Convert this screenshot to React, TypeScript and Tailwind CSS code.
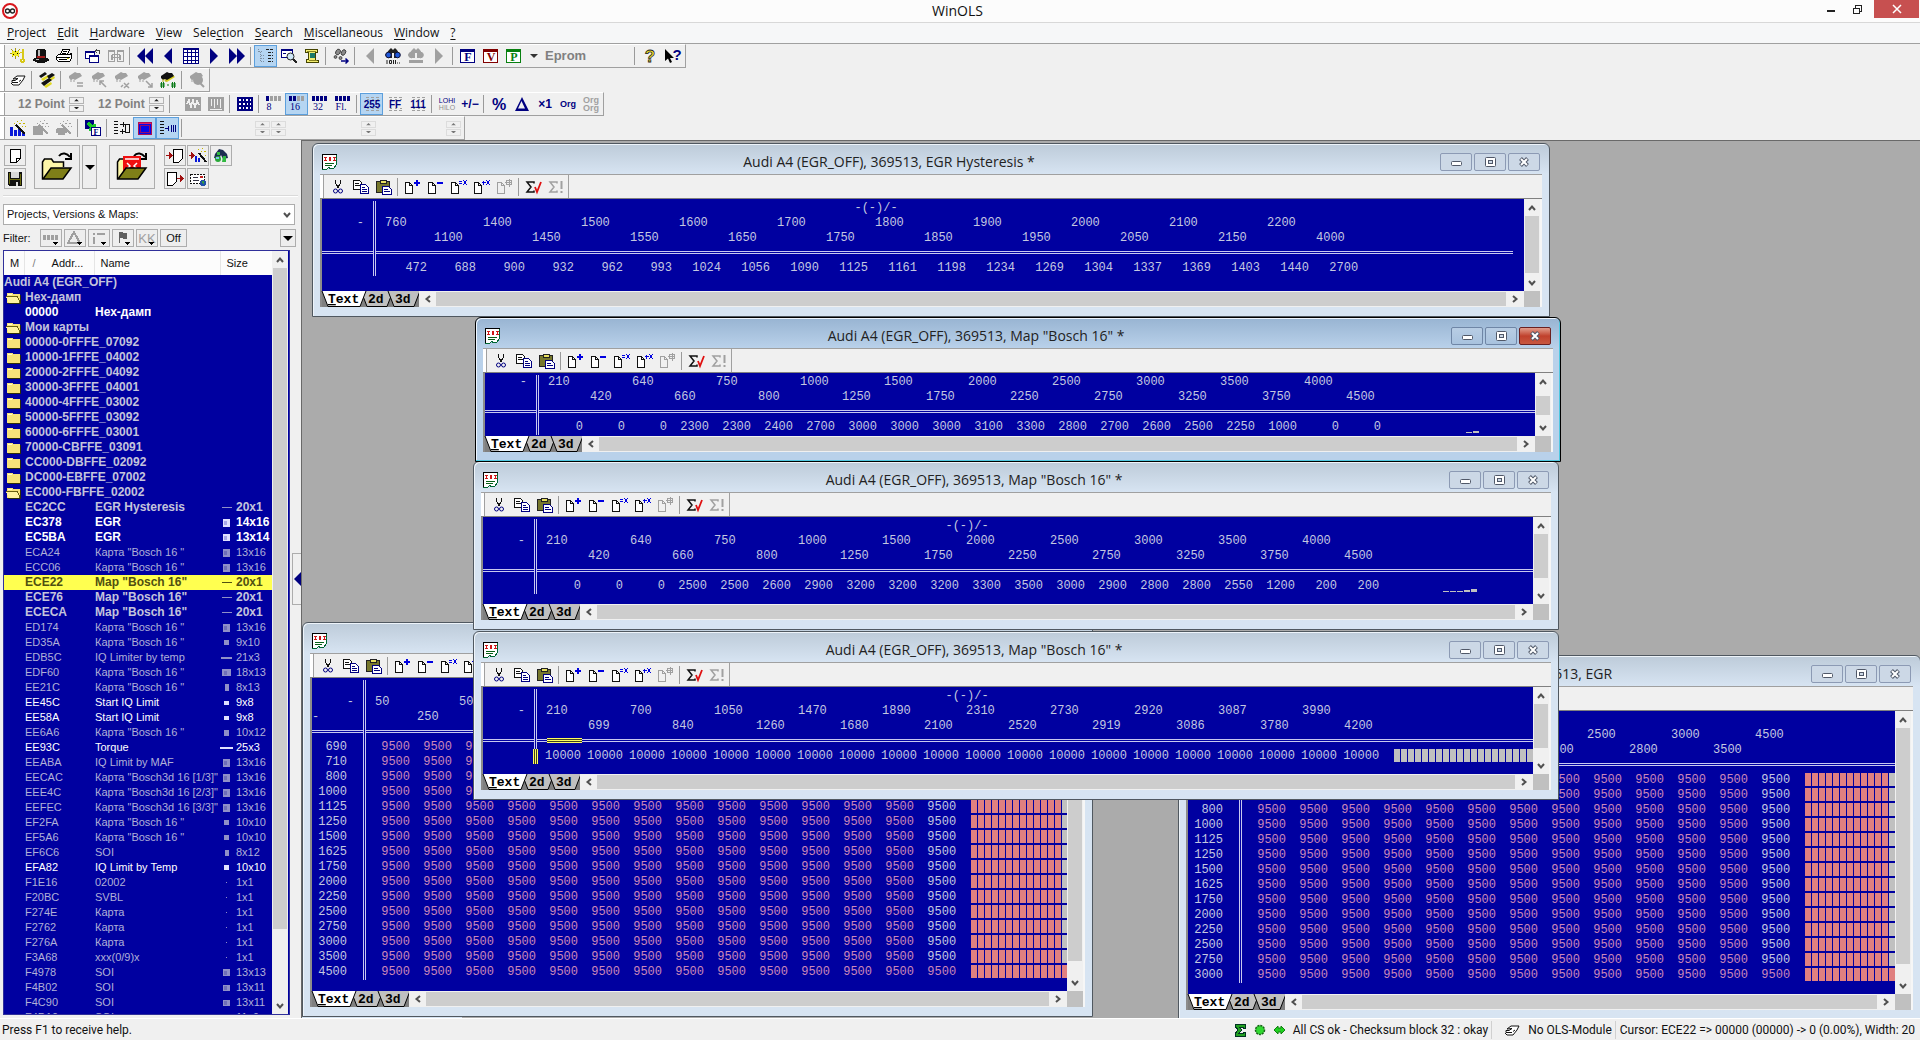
import type { ReactNode } from "react";
import clsx from "clsx";

/* ---------- icons ---------- */

type SvgProps = { w?: number; h?: number; smooth?: boolean; children: ReactNode };

const Svg: React.FC<SvgProps> = ({ w = 16, h = 16, smooth, children }) => (
  <svg
    width={w}
    height={h}
    viewBox={`0 0 ${w} ${h}`}
    fill="none"
    className="block shrink-0 overflow-visible"
    shapeRendering={smooth ? "auto" : "crispEdges"}
    aria-hidden="true"
  >
    {children}
  </svg>
);

const NAVY = "#000080";
const GRAY = "#a0a0a0";

type LabelProps = {
  x?: number;
  y: number;
  size?: number;
  fill?: string;
  serif?: boolean;
  light?: boolean;
  children: ReactNode;
};

const Label: React.FC<LabelProps> = ({ x = 8, y, size = 9, fill = NAVY, serif, light, children }) => (
  <text
    x={x}
    y={y}
    fontSize={size}
    fill={fill}
    textAnchor="middle"
    fontWeight={light ? 400 : 700}
    fontFamily={serif ? "Liberation Serif, serif" : "Liberation Sans, sans-serif"}
  >
    {children}
  </text>
);

const LogoIcon = () => (
  <Svg w={18} h={18} smooth>
    <circle cx="9" cy="9" r="7" fill="#fff" stroke="#d8161c" strokeWidth="2" />
    <circle cx="6.5" cy="9" r="2" stroke="#222" strokeWidth="1.3" />
    <circle cx="11.5" cy="9" r="2" stroke="#222" strokeWidth="1.3" />
  </Svg>
);

const KeyIcon = () => (
  <Svg>
    <path d="M0 5.5h10M5.5 0v11M1.5 1.5l8 8M9.5 1.5l-8 8" stroke="#a89c10" />
    <path d="M2 3h7v5H2z" fill="#f0e820" />
    <path d="M5 3h1v1H5zM3 6h1v1H3zM7 5h1v1H7z" fill="#000" />
    <path d="M12 1h2v10h-2zM10 4h2v1h-2zM10 11h5v3h-1v1h-3v-1h-1z" fill="#d8c818" />
    <path d="M12 12h1v1h-1z" fill="#fff" />
  </Svg>
);

const HatIcon = () => (
  <Svg>
    <path d="M4 1h8v1h1v8h2v1h1v2h-2v1h-2v1H4v-1H2v-1H0v-2h1v-1h2V2h1z" fill="#111" />
    <path d="M5 2h2v6H5zM3 11h3v1H3z" fill="#bbb" />
    <path d="M4 8h8v2H4z" fill="#a01818" />
  </Svg>
);

const PrinterIcon = () => (
  <Svg>
    <path d="M4.5 6.5l2-5h7l-2 5M2.5 6.5h11l2-1v5l-2 3h-11l-2-2v-3z" fill="#fff" stroke="#000" />
    <path d="M7 3.5h4M6 5.5h4M1 9.5h13M3 11.5h8" stroke="#000" />
    <path d="M11 10h2v1h-2z" fill="#d0d000" />
  </Svg>
);

const WindowsIcon = () => (
  <Svg>
    <path d="M.5 3.5h9v7h-9z" stroke={NAVY} fill="#fff" />
    <path d="M0 3h10v2H0z" fill={NAVY} />
    <path d="M4.5 7.5h9v7h-9z" stroke={NAVY} fill="#fff" />
    <path d="M4 7h10v2H4z" fill={NAVY} />
    <path d="M11 2.5h3v3M12 1l-2 2 2 2" stroke="#444" />
  </Svg>
);

const CompareIcon = () => (
  <Svg>
    <path d="M.5 2.5h6v11h-6zM9.5 2.5h6v11h-6z" stroke={GRAY} />
    <path d="M0 2h7v2H0zM9 2h7v2H9zM4 6h8v1H4zM4 9h8v1H4zM3 7h2v5H3zM11 7h2v5h-2z" fill={GRAY} />
  </Svg>
);

const Arrow: React.FC<{ left?: boolean; double?: boolean; gray?: boolean }> = ({ left, double, gray }) => (
  <Svg smooth>
    <g fill={gray ? GRAY : NAVY} transform={left ? "translate(16 0) scale(-1 1)" : undefined}>
      {double ? <path d="M0 0l8 8-8 8zM8 0l8 8-8 8z" /> : <path d="M4 0l8 8-8 8z" />}
    </g>
  </Svg>
);

const GridIcon = () => (
  <Svg>
    <path d="M.5.5h15v15H.5zM.5 4.5h15M.5 8.5h15M.5 12.5h15M4.5.5v15M8.5.5v15M12.5.5v15" stroke={NAVY} fill="#fff" />
    <path d="M0 0h16v2H0z" fill={NAVY} />
  </Svg>
);

const TreeIcon = () => (
  <Svg>
    <path d="M.5 1v3M1 3.5h4M2.5 4v10M3 7.5h3M3 10.5h3M3 13.5h3" stroke="#7d8ea0" strokeDasharray="1 1" />
    <path d="M8 1.5h7M10 4.5h5M10 7.5h5M10 10.5h5M10 13.5h5" stroke="#222" strokeDasharray="3 1" />
  </Svg>
);

const WindowZoomIcon = () => (
  <Svg>
    <path d="M.5 1.5h11v8H.5z" stroke={NAVY} fill="#fff" />
    <path d="M0 1h12v2H0zM2 5h3v1H2z" fill={NAVY} />
    <circle cx="9.5" cy="8.5" r="3.5" stroke="#222" fill="#cfe8f8" shapeRendering="auto" />
    <path d="M12 11l3.5 4" stroke="#222" strokeWidth="2" />
  </Svg>
);

const ScrollIcon = () => (
  <Svg>
    <path d="M1.5 1.5h12v3h-2v8h3v2h-12v-3h2v-7h-3z" stroke="#444400" fill="#f4ee70" />
    <path d="M6 5h5v5H6z" fill="#1a7a6a" />
    <path d="M3 3h9M5 12h8" stroke="#8a8420" />
  </Svg>
);

const StepsIcon = () => (
  <Svg smooth>
    <g fill="#8a8a8a" stroke="#333" strokeWidth=".8">
      <ellipse cx="5" cy="4" rx="2.2" ry="3" transform="rotate(30 5 4)" />
      <ellipse cx="10.5" cy="4.5" rx="2" ry="3" transform="rotate(30 10.5 4.5)" />
      <circle cx="2.5" cy="9" r="1.4" />
      <circle cx="7.5" cy="10" r="1.5" />
    </g>
    <path d="M8 13h7M12.5 10.5L15 13l-2.5 2.5" stroke={NAVY} strokeWidth="1.5" />
  </Svg>
);

const BinocularsIcon = ({ gray = false }) => (
  <Svg smooth>
    <path d="M4 2l2-2 2 2 2-2 2 2 3 5-3 3H9V5H7v5H3L0 7z" fill={gray ? GRAY : "#222"} />
    <circle cx="3.5" cy="7" r="2.8" fill={gray ? GRAY : "#2058d8"} stroke={gray ? GRAY : "#113"} />
    <circle cx="12.5" cy="7" r="2.8" fill={gray ? GRAY : "#2058d8"} stroke={gray ? GRAY : "#113"} />
    {gray ? <path d="M1 12h14v3H1z" fill={GRAY} /> : <path d="M2 12v4M4.5 12.5h2v3h-2zM8.5 12v4M10.5 12v4M12 15h1M14 15h1" stroke="#222" />}
  </Svg>
);

const LetterBox: React.FC<{ letter: string; color: string }> = ({ letter, color }) => (
  <Svg>
    <path d="M.5 1.5h14v13H.5z" stroke={color} fill="#fff" />
    <path d="M0 1h15v3H0z" fill={color} />
    <Label x={8} y={13} size={12} fill={color} serif>
      {letter}
    </Label>
  </Svg>
);

const HelpIcon = () => (
  <Svg>
    <text x="8" y="14" textAnchor="middle" fontSize="17" fontWeight="700" fill="#f4e428" stroke="#222" strokeWidth=".8" fontFamily="Liberation Sans, sans-serif">
      ?
    </text>
  </Svg>
);

const PointerHelpIcon = () => (
  <Svg smooth>
    <path d="M0 1v12l3-2.5L5 15l2-1-2-4h4z" fill="#000" />
    <Label x={12} y={12} size={15}>
      ?
    </Label>
  </Svg>
);

const HandIcon = () => (
  <Svg smooth>
    <path d="M1 11l2 2h6l4-5 2-4H7L3 7l5-.5-3 2H2v2h6" stroke="#111" fill="#fff" />
    <path d="M9 9.5l2-1.5" stroke="#111" />
  </Svg>
);

const ChipIcon: React.FC<{ gray?: boolean; mark?: string; diff?: boolean }> = ({ gray, mark, diff }) => {
  const c = gray ? GRAY : "#111";
  return (
    <Svg smooth>
      {!gray && <path d="M4 8l9-5 2 2-8 5z" fill="#d8d020" />}
      <path d="M1 4l6-4 2 1h3l2 3-7 4-2-1-2 1-2-2z" fill={c} />
      <path d="M3 7v3M6 8v2" stroke={gray ? GRAY : "#b0a818"} />
      {mark === "=" && <path d="M9 11h6M9 14h6" stroke={c} strokeWidth="1.5" />}
      {mark === "nw" && <path d="M15 15L9 9M9 13V9h4" stroke={c} strokeWidth="1.5" />}
      {mark === "x" && <path d="M7 15l2-2M10 11l5 5M15 11l-5 5" stroke={c} strokeWidth="1.5" />}
      {mark === "se" && <path d="M9 9l6 6M15 11v4h-4" stroke={c} strokeWidth="1.5" />}
      {mark === "o" && <circle cx="9" cy="8" r="5" fill={c} />}
      {mark === "o" && <path d="M11 11l4 4" stroke={c} strokeWidth="2" />}
      {diff && <path d="M0 12h5M0 14h5M1.5 10v6M3.5 10v6M7 13h2M11 12h5M11 14h5M12.5 10v6M14.5 10v6" stroke="#0a7a18" />}
    </Svg>
  );
};

const ChipsIcon = () => (
  <Svg smooth>
    <path d="M2 7l7-4 1 2-6 4zM9 8l6-4 1 2-6 4zM5 14l7-4 1 2-6 4z" fill="#e0d820" />
    <path d="M0 4l6-4 2 2-6 4zM8 4l5-3 3 2-6 4zM2 11l8-5 3 2-8 6z" fill="#111" />
  </Svg>
);

const WaveIcon = ({ bars = false }) => (
  <Svg>
    <path d="M0 1h16v14H0z" fill={GRAY} />
    {bars ? (
      <path d="M3.5 3v7M6.5 3v9M9.5 3v6M12.5 3v9M2 13.5h12" stroke="#f0f0f0" />
    ) : (
      <path d="M2 8l2-4 2 7 2-7 2 7 2-6 2 4" stroke="#f0f0f0" strokeWidth="1.5" />
    )}
  </Svg>
);

const DotGridIcon = () => (
  <Svg>
    <path d="M0 1h16v14H0z" fill={NAVY} />
    <path d="M2 3h2v2H2zM6 3h1v2H6zM9 3h2v2H9zM13 3h1v2h-1zM2 7h2v2H2zM6 7h2v2H6zM10 7h1v2h-1zM13 7h1v2h-1zM2 11h2v2H2zM6 11h1v2H6zM9 11h2v2H9zM13 11h1v2h-1z" fill="#fff" />
  </Svg>
);

const BitsIcon: React.FC<{ text: string; on: number }> = ({ text, on }) => (
  <Svg>
    {[0, 1, 2, 3].map((i) => (
      <rect key={i} x={i * 4} y="0" width="3" height="5" fill={i < on ? NAVY : GRAY} />
    ))}
    <Label x={text.length > 1 ? 6 : 3} y={14} size={10} serif light>
      {text}
    </Label>
  </Svg>
);

const StackIcon: React.FC<{ text: string }> = ({ text }) => (
  <Svg>
    <path d="M2 1.5h3M7 1.5h3M12 1.5h3M2 14.5h3M7 14.5h3M12 14.5h3M3 3.5h2M8 3.5h2M13 3.5h2M3 12.5h2M8 12.5h2M13 12.5h2" stroke={GRAY} />
    <Label y={12} size={10}>
      {text}
    </Label>
  </Svg>
);

const WandIcon = ({ gray = false, oval = false }) => (
  <Svg>
    {gray ? (
      <path d={oval ? "M1 8h8v1h2v4H9v2H2v-2H0V9h1z" : "M0 6h10v9H0z"} fill={GRAY} />
    ) : (
      <path d="M0 7h3v9H0zM4 10h3v6H4zM8 8h3v8H8zM12 12h3v4h-3z" fill="#0818d8" />
    )}
    <path d="M6 5l9 9" stroke={gray ? GRAY : "#111"} strokeWidth="2" />
    <path d="M7 1h1v1H7zM11 0h1v1h-1zM13 3h2v1h-2zM9 3h2v1H9zM12 6h1v1h-1zM15 6h1v1h-1zM4 3h1v1H4z" fill={gray ? GRAY : "#c8b800"} />
  </Svg>
);

const FToolIcon = () => (
  <Svg>
    <path d="M0 0h9v9H0z" fill={NAVY} />
    <path d="M3 3l6 6M9 4v5H4" stroke="#18c828" strokeWidth="3" />
    <path d="M6.5 7.5h9v8h-9z" fill="#fff" stroke={NAVY} />
    <Label x={11} y={15} size={8} serif>
      F
    </Label>
  </Svg>
);

const LinesIcon = ({ arrows = false }) => (
  <Svg>
    <path d="M0 1.5h5M0 4.5h5M0 7.5h5M0 10.5h5M0 13.5h5" stroke="#111" strokeDasharray="4 1" />
    {arrows ? (
      <path d="M6 4.5h5M9 2v5M6 11.5h5M8 9v5M11.5 4.5h4v8h-4z" stroke="#111" />
    ) : (
      <path d="M5 8.5h4M8 6v5M11.5 5v7M13.5 5v7M15.5 5v7" stroke={NAVY} />
    )}
  </Svg>
);

const RedScreenIcon = () => (
  <Svg>
    <path d="M1.5 2.5h13v12h-13z" fill="#0808e8" stroke="#b01050" />
    <path d="M2 3h12v1H2zM4 5h8v1H4z" fill="#e0206a" />
    <path d="M3.5 5.5h9v7h-9z" stroke="#900c70" />
  </Svg>
);

const PageIcon = ({ w = 11, h = 14 }) => (
  <Svg w={w} h={h}>
    <path d={`M.5.5h${w - 1}v${h - 5}l-4 4H.5z`} fill="#fff" stroke="#000" />
    <path d={`M${w - 4.5} ${h - 1}v-3.5h4`} stroke="#000" />
  </Svg>
);

const FloppyIcon = () => (
  <Svg w={14} h={14}>
    <path d="M0 0h14v14H1l-1-1z" fill="#111" />
    <path d="M3 0h8v6H3z" fill="#d8d8d8" />
    <path d="M1 1h1v11H1zM12 2h1v11h-1zM2 7h10v1H2z" fill="#6b6b10" />
    <path d="M8 10h2v4H8z" fill="#ddd" />
  </Svg>
);

const FolderIcon = ({ red = false }) => (
  <Svg w={32} h={30} smooth>
    <path d="M1.5 27V10l2-3h7l2 3h10v5" fill="#fdf6a8" stroke="#000" strokeWidth="1.5" />
    <path d="M18 4c3-4 8-3 11 1M30 1v6h-6" stroke="#000" strokeWidth="2" />
    {red && <path d="M7 4h18v15H7z" fill="#f01010" />}
    {red && <path d="M9 7h14M11 11l3 3-3 3M21 11l-3 3 3 3" stroke="#fff" strokeWidth="1.5" />}
    <path d="M2 27l8-11h20l-8 11z" fill="#7f7f18" stroke="#000" strokeWidth="1.5" />
  </Svg>
);

const ImportIcon = ({ out = false }) => (
  <Svg w={18} h={16}>
    <path d={out ? "M1.5 1.5h9v9l-4 4h-5z" : "M7.5 1.5h9v9l-4 4h-5z"} fill="#fff" stroke="#000" />
    <path d={out ? "M11 7.5h5" : "M0 7.5h5"} stroke="#a01010" />
    <path d={out ? "M14 4l4 3.5-4 3.5z" : "M3 4l4 3.5L3 11z"} fill="#a01010" />
  </Svg>
);

const ImportWandIcon = () => (
  <Svg w={18} h={16}>
    <path d="M0 7.5h3" stroke="#a01010" />
    <path d="M2 4l4 3.5L2 11z" fill="#a01010" />
    <path d="M6 8h2v6H6zM9 10h2v4H9z" fill="#0818d8" />
    <path d="M10 5l7 9" stroke="#111" strokeWidth="2" />
    <path d="M9 1h1v1H9zM13 0h1v1h-1zM15 3h2v1h-2zM12 3h1v1h-1zM16 7h1v1h-1z" fill="#c8b800" />
  </Svg>
);

const GlobeIcon = () => (
  <Svg smooth>
    <path d="M2 6l4-5 4 1 4 4 1 4-5 1-2-4-2 4-5-1z" fill="#1c2c50" />
    <path d="M4 4h3v3H4zM10 8h3v6H9z" fill="#30b840" />
    <circle cx="5" cy="11" r="3" fill="#28a838" />
    <path d="M3 9h3v2H3z" fill="#80c0f0" />
  </Svg>
);

const MailIcon = () => (
  <Svg>
    <path d="M.5 3.5h14v9H.5z" fill="#fff" stroke="#111" strokeDasharray="2 1" />
    <path d="M3 6h5v1H3zM3 9h6v1H3z" fill="#334" />
    <path d="M10 5h3v2h-3z" fill="#c02020" />
    <circle cx="13" cy="12" r="3" fill="#2050a8" />
    <path d="M12 10h2v3h-1z" fill="#30a040" />
  </Svg>
);

const DocIcon = () => (
  <Svg>
    <path d="M.5.5h14v10l-3 4h-3l-2-1-2 2h-4z" fill="#fff" stroke="#063" />
    <path d="M.5 0v15M0 .5h15" stroke="#000" />
    <path d="M3.5 3v4M2 3.5h3M2 6.5h3M7.5 3.5h1v3h-1zM11 3.5h3M12.5 3v4M11 6.5h3" stroke="#d01818" />
    <path d="M3 9.5h9M3 11.5h7" stroke="#086018" />
  </Svg>
);

const CutIcon = () => (
  <Svg>
    <path d="M5.5 1v3l3 5M10.5 1v3l-3 5" stroke="#111" />
    <circle cx="5.5" cy="12" r="2" stroke={NAVY} shapeRendering="auto" />
    <circle cx="10.5" cy="12" r="2" stroke={NAVY} shapeRendering="auto" />
  </Svg>
);

const CopyIcon = () => (
  <Svg>
    <path d="M.5 1.5h6l2 2v7h-8z" fill="#fff" stroke="#111" />
    <path d="M2 4.5h4M2 6.5h5" stroke="#111" />
    <path d="M7.5 5.5h5l3 3v6h-8z" fill="#fff" stroke={NAVY} />
    <path d="M9 8.5h3M9 10.5h5M9 12.5h5" stroke={NAVY} />
  </Svg>
);

const PasteIcon = () => (
  <Svg>
    <path d="M.5 2.5h13v11H.5z" fill="#77782c" stroke="#222" />
    <path d="M4 1h6v3H4z" fill="#e8e060" stroke="#222" />
    <path d="M6.5 7.5h6l3 3v5h-9z" fill="#fff" stroke={NAVY} />
    <path d="M8 10.5h4M8 12.5h6" stroke={NAVY} />
  </Svg>
);

const PageMarkIcon: React.FC<{ d: string; gray?: boolean; bold?: boolean }> = ({ d, gray, bold }) => (
  <Svg>
    <path d="M.5 3.5h4l3 3v8h-7zM4.5 3.5v3h3" fill={gray ? "none" : "#fff"} stroke={gray ? GRAY : "#111"} />
    <path d={d} stroke={gray ? GRAY : "#0000e0"} strokeWidth={bold ? 2 : 1} />
  </Svg>
);

const SigmaIcon = ({ gray = false }) => (
  <Svg smooth>
    <path d="M8 4.5V3H1l4 5-4 5h7v-1.5" stroke={gray ? GRAY : "#111"} strokeWidth="1.5" />
    {gray ? (
      <path d="M12.5 2v8M12.5 12v2" stroke={GRAY} strokeWidth="2" />
    ) : (
      <path d="M9 8l2 5 4-10" stroke="#e01010" strokeWidth="1.8" />
    )}
  </Svg>
);

const Chevron: React.FC<{ dir: "up" | "down" | "left" | "right" }> = ({ dir }) => (
  <Svg w={8} h={8} smooth>
    <path
      d={{ up: "M1 6l3-3.5L7 6", down: "M1 2l3 3.5L7 2", left: "M6 1L2.5 4 6 7", right: "M2 1l3.5 3L2 7" }[dir]}
      stroke="#505050"
      strokeWidth="2"
    />
  </Svg>
);

const Caret = ({ w = 8, color = "#000" }) => (
  <svg width={w} height={w / 2} viewBox="0 0 8 4" className="block shrink-0" aria-hidden="true">
    <path d="M0 0h8L4 4z" fill={color} />
  </svg>
);

/* ---------- toolbars ---------- */

type ToolProps = { label: string; on?: boolean; off?: boolean; children: ReactNode };

const Tool: React.FC<ToolProps> = ({ label, on, off, children }) => (
  <button
    aria-label={label}
    disabled={off}
    className={clsx("flex h-[22px] w-[23px] shrink-0 items-center justify-center", on && "border border-[#5c9fdc] bg-[#b5d5f2]")}
  >
    {children}
  </button>
);

const Sep = () => <div className="mr-[3px] ml-[2px] h-[18px] w-px shrink-0 bg-[#9a9a9a]" />;

const Bar: React.FC<{ children: ReactNode }> = ({ children }) => (
  <div className="flex h-6 w-fit items-center border-t border-r border-b border-t-white border-r-[#a0a0a0] border-b-[#a0a0a0] pr-px">
    <div className="mr-px h-full w-[5px] shrink-0 border-r border-[#a0a0a0] bg-white" />
    {children}
  </div>
);

const Spinner = ({ faint = false }) => (
  <div className="flex w-[15px] shrink-0 flex-col gap-px">
    {["Increase", "Decrease"].map((name) => (
      <button
        key={name}
        aria-label={name}
        className={clsx("flex h-[7px] items-center justify-center border", faint ? "border-[#dcdcdc]" : "border-[#b4b4b4]")}
      >
        <span className={name === "Increase" ? "rotate-180" : ""}>
          <Caret w={5} color={faint ? "#777" : "#222"} />
        </span>
      </button>
    ))}
  </div>
);

const PointField: React.FC<{ label: string }> = ({ label }) => (
  <>
    <input
      aria-label={label}
      readOnly
      value="12 Point"
      className="w-[51px] font-['Liberation_Sans',sans-serif] text-xs font-bold text-[#808080] outline-none"
    />
    <Spinner />
  </>
);

const Toolbars = () => (
  <div className="shrink-0">
    <Bar>
      <Tool label="Key"><KeyIcon /></Tool>
      <Tool label="Wizard"><HatIcon /></Tool>
      <Tool label="Print"><PrinterIcon /></Tool>
      <Sep />
      <Tool label="Windows"><WindowsIcon /></Tool>
      <Tool label="Compare" off><CompareIcon /></Tool>
      <Sep />
      <Tool label="First"><Arrow left double /></Tool>
      <Tool label="Previous"><Arrow left /></Tool>
      <Tool label="Grid"><GridIcon /></Tool>
      <Tool label="Next"><Arrow /></Tool>
      <Tool label="Last"><Arrow double /></Tool>
      <Sep />
      <Tool label="Tree" on><TreeIcon /></Tool>
      <Tool label="Overview"><WindowZoomIcon /></Tool>
      <Tool label="Script"><ScrollIcon /></Tool>
      <Sep />
      <Tool label="Follow"><StepsIcon /></Tool>
      <Sep />
      <Tool label="Find previous" off><Arrow left gray /></Tool>
      <Tool label="Find"><BinocularsIcon /></Tool>
      <Tool label="Find again" off><BinocularsIcon gray /></Tool>
      <Tool label="Find next" off><Arrow gray /></Tool>
      <Sep />
      <Tool label="Field F"><LetterBox letter="F" color={NAVY} /></Tool>
      <Tool label="Field V"><LetterBox letter="V" color="#800000" /></Tool>
      <Tool label="Field P"><LetterBox letter="P" color="#088010" /></Tool>
      <button aria-label="More" className="flex h-[22px] w-[17px] items-center justify-center">
        <Caret color="#333" />
      </button>
      <input
        aria-label="Element"
        readOnly
        value="Eprom"
        className="w-[90px] pl-[3px] font-['Liberation_Sans',sans-serif] text-[13px] font-bold text-[#808080] outline-none"
      />
      <Sep />
      <Tool label="Help"><HelpIcon /></Tool>
      <Tool label="Context help"><PointerHelpIcon /></Tool>
    </Bar>
    <Bar>
      <Tool label="Module"><HandIcon /></Tool>
      <Sep />
      <Tool label="Chips"><ChipsIcon /></Tool>
      <Sep />
      <Tool label="Chip equal" off><ChipIcon gray mark="=" /></Tool>
      <Tool label="Chip read" off><ChipIcon gray mark="nw" /></Tool>
      <Tool label="Chip erase" off><ChipIcon gray mark="x" /></Tool>
      <Tool label="Chip write" off><ChipIcon gray mark="se" /></Tool>
      <Tool label="Chip compare"><ChipIcon diff /></Tool>
      <Sep />
      <Tool label="Chip search" off><ChipIcon gray mark="o" /></Tool>
    </Bar>
    <Bar>
      <div className="flex items-center gap-[14px] pr-[3px] pl-3">
        <div className="flex items-center"><PointField label="Font size" /></div>
        <div className="flex items-center"><PointField label="Second font size" /></div>
      </div>
      <Sep />
      <div className="w-2" />
      <Tool label="Wave" off><WaveIcon /></Tool>
      <Tool label="Bars" off><WaveIcon bars /></Tool>
      <Sep />
      <Tool label="Cells"><DotGridIcon /></Tool>
      <Sep />
      <Tool label="8 bit"><BitsIcon text="8" on={1} /></Tool>
      <Tool label="16 bit" on><BitsIcon text="16" on={2} /></Tool>
      <Tool label="32 bit"><BitsIcon text="32" on={4} /></Tool>
      <Tool label="Float"><BitsIcon text="Fl." on={4} /></Tool>
      <Sep />
      <Tool label="Decimal" on><StackIcon text="255" /></Tool>
      <Tool label="Hexadecimal"><StackIcon text="FF" /></Tool>
      <Tool label="Binary"><StackIcon text="111" /></Tool>
      <Sep />
      <Tool label="Byte order">
        <Svg>
          <Label y={7} size={7} light>LOHI</Label>
          <Label y={14} size={7} fill="#909090" light>HILO</Label>
        </Svg>
      </Tool>
      <Tool label="Sign">
        <Svg><Label y={12} size={12}>+/−</Label></Svg>
      </Tool>
      <Sep />
      <Tool label="Percent"><Svg><Label y={14} size={16}>%</Label></Svg></Tool>
      <Tool label="Difference">
        <Svg smooth><path d="M8 1l7 14H1zM7.5 5L4 12.5h7z" fill={NAVY} fillRule="evenodd" /></Svg>
      </Tool>
      <Tool label="Factor"><Svg><Label y={12} size={12}>×1</Label></Svg></Tool>
      <Tool label="Original"><Svg><Label y={11} size={9}>Org</Label></Svg></Tool>
      <Tool label="Original compare" off>
        <Svg>
          <Label y={7} size={9} fill={GRAY}>Org</Label>
          <Label y={15} size={9} fill={GRAY}>Org</Label>
        </Svg>
      </Tool>
    </Bar>
    <Bar>
      <Tool label="Map wizard"><WandIcon /></Tool>
      <Tool label="Map wizard area" off><WandIcon gray /></Tool>
      <Tool label="Map wizard shape" off><WandIcon gray oval /></Tool>
      <Sep />
      <Tool label="Transfer"><FToolIcon /></Tool>
      <Sep />
      <Tool label="Sync"><LinesIcon arrows /></Tool>
      <Tool label="Screen" on><RedScreenIcon /></Tool>
      <Tool label="Columns" on><LinesIcon /></Tool>
      <Sep />
      <div className="flex items-center pr-0.5 pl-[70px]">
        <Spinner faint />
        <div className="w-px" />
        <Spinner faint />
        <div className="w-[75px]" />
        <Spinner faint />
        <div className="w-[70px]" />
        <Spinner faint />
      </div>
    </Bar>
  </div>
);

/* ---------- sidebar ---------- */

type MapRow = [addr: string, name: string, size: string, tone: "bold" | "white" | "boldWhite" | "dim" | "selected"];

const FOLDERS = [
  "00000-0FFFE_07092",
  "10000-1FFFE_04002",
  "20000-2FFFE_04092",
  "30000-3FFFE_04001",
  "40000-4FFFE_03002",
  "50000-5FFFE_03092",
  "60000-6FFFE_03001",
  "70000-CBFFE_03091",
  "CC000-DBFFE_02092",
  "DC000-EBFFE_07002",
];

const MAPS: MapRow[] = [
  ["EC2CC", "EGR Hysteresis", "20x1", "bold"],
  ["EC378", "EGR", "14x16", "boldWhite"],
  ["EC5BA", "EGR", "13x14", "boldWhite"],
  ["ECA24", 'Карта "Bosch 16 "', "13x16", "dim"],
  ["ECC06", 'Карта "Bosch 16 "', "13x16", "dim"],
  ["ECE22", 'Map "Bosch 16"', "20x1", "selected"],
  ["ECE76", 'Map "Bosch 16"', "20x1", "bold"],
  ["ECECA", 'Map "Bosch 16"', "20x1", "bold"],
  ["ED174", 'Карта "Bosch 16 "', "13x16", "dim"],
  ["ED35A", 'Карта "Bosch 16 "', "9x10", "dim"],
  ["EDB5C", "IQ Limiter by temp", "21x3", "dim"],
  ["EDF60", 'Карта "Bosch 16 "', "18x13", "dim"],
  ["EE21C", 'Карта "Bosch 16 "', "8x13", "dim"],
  ["EE45C", "Start IQ Limit", "9x8", "white"],
  ["EE58A", "Start IQ Limit", "9x8", "white"],
  ["EE6A6", 'Карта "Bosch 16 "', "10x12", "dim"],
  ["EE93C", "Torque", "25x3", "white"],
  ["EEABA", "IQ Limit by MAF", "13x16", "dim"],
  ["EECAC", 'Карта "Bosch3d 16 [1/3]"', "13x16", "dim"],
  ["EEE4C", 'Карта "Bosch3d 16 [2/3]"', "13x16", "dim"],
  ["EEFEC", 'Карта "Bosch3d 16 [3/3]"', "13x16", "dim"],
  ["EF2FA", 'Карта "Bosch 16 "', "10x10", "dim"],
  ["EF5A6", 'Карта "Bosch 16 "', "10x10", "dim"],
  ["EF6C6", "SOI", "8x12", "dim"],
  ["EFA82", "IQ Limit by Temp", "10x10", "white"],
  ["F1E16", "02002", "1x1", "dim"],
  ["F20BC", "SVBL", "1x1", "dim"],
  ["F274E", "Карта", "1x1", "dim"],
  ["F2762", "Карта", "1x1", "dim"],
  ["F276A", "Карта", "1x1", "dim"],
  ["F3A68", "xxx(0/9)x", "1x1", "dim"],
  ["F4978", "SOI", "13x13", "dim"],
  ["F4B02", "SOI", "13x11", "dim"],
  ["F4C90", "SOI", "13x11", "dim"],
  ["F4D10", "SOI", "11x9", "dim"],
];

const TONES = {
  bold: "text-[12px] font-bold text-[#c4c4dc]",
  boldWhite: "text-[12px] font-bold text-white",
  white: "text-[11px] text-white",
  dim: "text-[11px] text-[#b0b0d8]",
  selected: "bg-[#ffff50] text-[12px] font-bold text-[#505010]",
};

// thumbnail of a map, drawn in proportion to its dimensions
const MapThumb: React.FC<{ size: string; tone: MapRow[3] }> = ({ size, tone }) => {
  const [cols, rows] = size.split("x").map(Number);
  const w = Math.max(1, Math.round(cols / 2));
  const h = Math.max(1, Math.round(rows / 2));
  const bright = tone === "white" || tone === "boldWhite";
  return (
    <Svg w={13} h={9}>
      <rect
        x={Math.round((13 - w) / 2)}
        y={Math.round((9 - h) / 2)}
        width={w}
        height={h}
        fill={tone === "selected" ? "#505010" : bright ? "#e0e0ff" : "#9090c8"}
      />
      {h > 3 && w > 5 && <rect x="4" y="3" width="3" height="4" fill={bright ? "#a8a8e8" : "#7070b8"} />}
    </Svg>
  );
};

const TreeFolder = ({ open = false }) => (
  <Svg w={16} h={13}>
    <path d="M1 2h5l1 1h7v9H1z" fill="#f6e27a" />
    <path d="M1.5 12.5h13V4" stroke="#303008" />
    <path d="M2 3h4v1H2z" fill="#fffbd0" />
    {open && <path d="M0 6h11l3 6H3z" fill="#fff2a0" />}
    {open && <path d="M0 5.5h11.5l2.500 6" stroke="#6a6010" />}
  </Svg>
);

const FolderRow: React.FC<{ name: string; open?: boolean }> = ({ name, open }) => (
  <tr className={clsx("h-[15px]", TONES.bold)}>
    <td className="p-0 pl-[2px]"><TreeFolder open={open} /></td>
    <td colSpan={3} className="p-0 pl-px">{name}</td>
  </tr>
);

const DataRow: React.FC<{ row: MapRow }> = ({ row: [addr, name, size, tone] }) => (
  <tr className={clsx("h-[15px]", TONES[tone])}>
    <td className="p-0" />
    <td className="p-0 pl-px">{addr}</td>
    <td className="p-0 pl-px">{name}</td>
    <td className="p-0">
      <span className="flex h-[15px] items-center gap-[3px]">
        {size && <MapThumb size={size} tone={tone} />}
        {size}
      </span>
    </td>
  </tr>
);

const PanelButton: React.FC<{ label: string; className: string; children: ReactNode }> = ({ label, className, children }) => (
  <button aria-label={label} className={clsx("flex items-center justify-center border border-[#adadad] bg-[#eeeeee]", className)}>
    {children}
  </button>
);

const Sidebar = () => (
  <aside className="flex w-[301px] shrink-0 flex-col overflow-hidden pt-[5px] pl-[3px] font-['Liberation_Sans',sans-serif]">
    <div className="flex h-[44px] shrink-0 pl-px">
      <div className="flex flex-col gap-[2px]">
        <PanelButton label="New" className="h-[21px] w-[22px]"><PageIcon /></PanelButton>
        <PanelButton label="Save" className="h-[21px] w-[22px]"><FloppyIcon /></PanelButton>
      </div>
      <PanelButton label="Open" className="ml-2 w-[46px]"><FolderIcon /></PanelButton>
      <PanelButton label="Recent" className="ml-[2px] w-[15px]"><Caret w={10} /></PanelButton>
      <PanelButton label="Open copy" className="ml-3 w-[46px]"><FolderIcon red /></PanelButton>
      <div className="ml-[9px] grid grid-cols-3 gap-x-px gap-y-[2px]">
        <PanelButton label="Import" className="h-[21px] w-[22px]"><ImportIcon /></PanelButton>
        <PanelButton label="Import maps" className="h-[21px] w-[22px]"><ImportWandIcon /></PanelButton>
        <PanelButton label="Online search" className="h-[21px] w-[22px]"><GlobeIcon /></PanelButton>
        <PanelButton label="Export" className="h-[21px] w-[22px]"><ImportIcon out /></PanelButton>
        <PanelButton label="Send" className="h-[21px] w-[22px]"><MailIcon /></PanelButton>
      </div>
    </div>
    <div className="mt-[6px] mr-[3px] h-[2px] shrink-0 border-t border-[#dadada] bg-white" />
    <div className="relative mt-[7px] mr-[6px] shrink-0">
      <select aria-label="View" className="block h-[21px] w-full appearance-none border border-[#adadad] bg-white pl-[3px] text-[11px] outline-none">
        <option>Projects, Versions &amp; Maps:</option>
      </select>
      <span className="pointer-events-none absolute top-[7px] right-1"><Chevron dir="down" /></span>
    </div>
    <div className="mt-1 flex h-[18px] shrink-0 items-center gap-[2px] text-[11px]">
      <span className="w-[35px]">Filter:</span>
      <PanelButton label="Filter size" className="h-[18px] w-[22px]">
        <Svg><path d="M0 5h3v5H0zM4 5h3v5H4zM8 5h3v5H8zM12 5h3v5h-3z" fill={GRAY} /><path d="M9 12h6l-3 3z" fill="#000" /></Svg>
      </PanelButton>
      <PanelButton label="Filter changes" className="h-[18px] w-[22px]">
        <Svg><path d="M7 2l6 11H1z" stroke={GRAY} strokeWidth="2" /><path d="M9 12h6l-3 3z" fill="#000" /></Svg>
      </PanelButton>
      <PanelButton label="Filter type" className="h-[18px] w-[22px]">
        <Svg><path d="M2 7h2v7H2zM2 3h2v2H2zM6 3h8v2H6z" fill={GRAY} /><path d="M9 12h6l-3 3z" fill="#000" /></Svg>
      </PanelButton>
      <PanelButton label="Filter flags" className="h-[18px] w-[22px]">
        <Svg><path d="M4 2h1v11H4zM5 2h3v1h4v6H8V8H5z" fill="#606060" /><path d="M9 12h6l-3 3z" fill="#000" /></Svg>
      </PanelButton>
      <PanelButton label="Filter names" className="h-[18px] w-[22px]">
        <Svg><Label y={13} size={13} fill={GRAY} light>KK</Label><path d="M9 12h6l-3 3z" fill="#000" /></Svg>
      </PanelButton>
      <button className="h-[18px] w-[27px] border border-[#adadad] bg-[#eeeeee] leading-none">Off</button>
      <div className="grow" />
      <PanelButton label="Columns" className="mr-[5px] h-[18px] w-4"><Caret w={10} /></PanelButton>
    </div>
    <div className="mt-[3px] mb-[3px] flex min-h-0 grow">
      <div className="flex w-[287px] shrink-0 overflow-hidden border border-[#30309a] bg-[#0000a0]">
        <div className="h-full w-[268px] overflow-hidden">
          <table className="w-full table-fixed border-collapse whitespace-nowrap leading-[15px]">
            <colgroup>
              <col className="w-5" />
              <col className="w-[70px]" />
              <col className="w-[126px]" />
              <col />
            </colgroup>
            <thead>
              <tr className="h-6 bg-[#fcfcfc] text-left text-[11px]">
                <th className="border-r border-[#e5e5e5] p-0 pl-[6px] font-normal">M</th>
                <th className="border-r border-[#e5e5e5] p-0 pl-2 font-normal">
                  <span className="mr-4 text-[#808080]">/</span>Addr...
                </th>
                <th className="border-r border-[#e5e5e5] p-0 pl-[6px] font-normal">Name</th>
                <th className="p-0 pl-[6px] font-normal">Size</th>
              </tr>
            </thead>
            <tbody>
              <tr className={clsx("h-[15px]", TONES.bold)}>
                <td colSpan={4} className="p-0">Audi A4 (EGR_OFF)</td>
              </tr>
              <FolderRow name="Нех-дамп" open />
              <DataRow row={["00000", "Нех-дамп", "", "boldWhite"]} />
              <FolderRow name="Мои карты" open />
              {FOLDERS.map((name) => (
                <FolderRow key={name} name={name} />
              ))}
              <FolderRow name="EC000-FBFFE_02002" open />
              {MAPS.map((row) => (
                <DataRow key={row[0]} row={row} />
              ))}
            </tbody>
          </table>
        </div>
        <VScroll thumb="h-[661px]" />
      </div>
      <button aria-label="Collapse" className="mt-[303px] ml-[2px] flex h-[52px] w-[9px] items-center justify-end border border-r-0 border-[#adadad] bg-[#f0f0f0]">
        <Svg w={7} h={14} smooth><path d="M7 0v14L0 7z" fill={NAVY} /></Svg>
      </button>
    </div>
  </aside>
);

/* ---------- map windows ---------- */

const VScroll: React.FC<{ thumb: string }> = ({ thumb }) => (
  <div className="flex w-4 shrink-0 flex-col bg-[#f0f0f0]">
    <button aria-label="Scroll up" className="flex h-[17px] shrink-0 items-center justify-center"><Chevron dir="up" /></button>
    <div className="min-h-0 grow">
      <div className={clsx("mx-px bg-[#cdcdcd]", thumb)} />
    </div>
    <button aria-label="Scroll down" className="flex h-[17px] shrink-0 items-center justify-center"><Chevron dir="down" /></button>
  </div>
);

const TabButton: React.FC<{ text: string; w: number; active?: boolean }> = ({ text, w, active }) => (
  <button className={clsx("h-4", active && "z-1")}>
    <Svg w={w} h={16} smooth>
      <path d={`M${active ? 0 : -2} 0l6 15.5H${w - 3}L${w + 3} 0`} fill={active ? "#fff" : "#c0c0c0"} stroke="#000" />
      <text x={active ? 6 : 5} y="12" fontSize="13" fontWeight="700" fill="#000" fontFamily="Liberation Mono, monospace">
        {active ? (
          <>
            <tspan textDecoration="underline">T</tspan>ext
          </>
        ) : (
          text
        )}
      </text>
    </Svg>
  </button>
);

const CaptionButton: React.FC<{ label: string; active?: boolean; danger?: boolean; children: ReactNode }> = ({ label, active, danger, children }) => (
  <button
    aria-label={label}
    className={clsx(
      "flex h-[18px] w-8 items-center justify-center rounded-[2px] border",
      danger && "border-[#6b2020] bg-linear-to-b from-[#e09c8c] via-[#c0402c] to-[#c85840]",
      !danger && active && "border-[#6f86a6] bg-linear-to-b from-[#b8cde4] to-[#a8c2de]",
      !danger && !active && "border-[#8c9ab4] bg-[#ccd8e6]",
    )}
  >
    <Svg w={12} h={10} smooth>{children}</Svg>
  </button>
);

const WINDOW_TOOLS: { label: string; icon: ReactNode; off?: boolean; sepBefore?: boolean }[] = [
  { label: "Cut", icon: <CutIcon /> },
  { label: "Copy", icon: <CopyIcon /> },
  { label: "Paste", icon: <PasteIcon /> },
  { label: "Increase values", icon: <PageMarkIcon bold d="M9 4h6M12 1v6" />, sepBefore: true },
  { label: "Decrease values", icon: <PageMarkIcon bold d="M9 4h6" /> },
  { label: "Set values", icon: <PageMarkIcon d="M8 2.5h3M8 4.5h3M12 1l4 5M16 1l-4 5" /> },
  { label: "Change values", icon: <PageMarkIcon d="M8 3.5h4M9.5 2v4M12 1l4 5M16 1l-4 5" /> },
  { label: "Original values", icon: <PageMarkIcon gray d="M8 3.5h7M9.5 1.5h5v4h-5zM12 0v8" />, off: true },
  { label: "Checksum", icon: <SigmaIcon />, sepBefore: true },
  { label: "Checksum info", icon: <SigmaIcon gray />, off: true },
];

type MapWindowProps = {
  title: string;
  place: string;
  canvas: string;
  thumb: string;
  active?: boolean;
  children: ReactNode;
};

const MapWindow: React.FC<MapWindowProps> = ({ title, place, canvas, thumb, active, children }) => (
  <section
    className={clsx(
      "absolute flex flex-col rounded-t-[6px] border px-[7px] pb-[9px]",
      active
        ? "border-black bg-[#b9d1ea] bg-linear-to-b from-[#98b4d2] to-[#b9d1ea] to-[30px] shadow-[inset_-1px_-1px_0_#50c8e0,inset_1px_1px_0_#eef6ff]"
        : "border-[#505860] bg-[#d7e4f2] bg-linear-to-b from-[#bdcbd9] to-[#d7e4f2] to-[30px] shadow-[inset_1px_1px_0_#eef4fa]",
      place,
    )}
  >
    <header className="flex h-[30px] shrink-0 items-center gap-[2px] px-[2px] pt-[6px]">
      <DocIcon />
      <h2 className="grow text-center text-sm whitespace-nowrap text-[#222]">{title}</h2>
      <div className="flex gap-[2px]">
        <CaptionButton label="Minimize" active={active}>
          <rect x="1.5" y="4.5" width="10" height="4" rx="1" fill="#fff" stroke="#505868" />
        </CaptionButton>
        <CaptionButton label="Maximize" active={active}>
          <rect x="1.5" y=".5" width="10" height="9" rx="1" fill="#fff" stroke="#505868" />
          <rect x="4.5" y="3.5" width="4" height="3" fill="#ccd8e6" stroke="#505868" />
        </CaptionButton>
        <CaptionButton label="Close" danger={active}>
          <path d="M2.5 1.5l7 7M9.5 1.5l-7 7" stroke="#505868" strokeWidth="4" />
          <path d="M3 2l6 6M9 2L3 8" stroke="#fff" strokeWidth="2" />
        </CaptionButton>
      </div>
    </header>
    <div className="flex h-[25px] shrink-0 items-center border-t border-b border-t-[#a0a0a0] border-b-[#808080] bg-[#f0f0f0]">
      <div className="mr-[2px] h-full w-1 shrink-0 border-r border-[#a0a0a0] bg-white" />
      {WINDOW_TOOLS.map((tool) => (
        <div key={tool.label} className="flex items-center">
          {tool.sepBefore && <Sep />}
          <Tool label={tool.label} off={tool.off}>{tool.icon}</Tool>
        </div>
      ))}
      <div className="h-full w-px bg-[#a0a0a0]" />
    </div>
    <div className="border-x-2 border-r-[#f6f6f6] border-l-[#8c8c8c]">
      <div className="flex">
        <div className={clsx("min-w-0 grow overflow-hidden bg-[#0000a0] pt-[2px]", canvas)}>{children}</div>
        <VScroll thumb={thumb} />
      </div>
      <div className="flex h-4 bg-[#808080]">
        <TabButton text="Text" w={41} active />
        <TabButton text="2d" w={27} />
        <TabButton text="3d" w={27} />
        <div className="z-1 ml-[2px] flex min-w-0 grow bg-[#f0f0f0]">
          <button aria-label="Scroll left" className="flex w-[17px] items-center justify-center"><Chevron dir="left" /></button>
          <div className="my-px grow bg-[#cdcdcd]" />
          <button aria-label="Scroll right" className="flex w-[18px] items-center justify-center"><Chevron dir="right" /></button>
        </div>
        <div className="w-4 bg-[#c0c0c0]" />
      </div>
    </div>
  </section>
);

type GridProps = {
  heads: string;
  rows: { label?: string; values: string[] }[];
  barHeights?: number[];
  wide?: boolean;
  cornerless?: boolean;
  twoAxes?: boolean;
  picked?: boolean;
  changed?: boolean;
};

const Gutter: React.FC<{ className?: string; picked?: boolean; children?: ReactNode }> = ({ className, picked, children }) => (
  <td className="p-0">
    {picked ? (
      <div className="flex h-[15px] w-[55px] justify-end">
        <div className="flex w-[5px] justify-center border-x border-[#ffff60] bg-[#404020]">
          <div className="w-px bg-[#ffff60]" />
        </div>
      </div>
    ) : (
      <div className={clsx("h-[15px] w-[54px] border-r-[3px] border-double border-[#c8c8f0] text-right", className)}>{children}</div>
    )}
  </td>
);

const MapGrid: React.FC<GridProps> = ({ heads, rows, barHeights, wide, cornerless, twoAxes, picked, changed }) => {
  const cols = heads.split(" ");
  return (
    <table className="w-full table-fixed border-collapse font-['Liberation_Mono',monospace] text-[12px] leading-[15px] whitespace-nowrap text-[#c4c8e0]">
      <colgroup>
        <col className="w-[56px]" />
        {cols.map((_, i) => (
          <col key={i} className={wide ? "w-[49px]" : "w-[42px]"} />
        ))}
        <col />
      </colgroup>
      <thead>
        {!cornerless && (
          <tr className="h-[15px]">
            <Gutter />
            <th colSpan={cols.length} className="p-0 pl-4 text-center font-normal">-(-)/-</th>
            <th />
          </tr>
        )}
        {[0, 1].map((line) => (
          <tr key={line} className="h-[15px] text-left">
            {line === 0 ? (
              <Gutter className="pr-[9px]">-</Gutter>
            ) : (
              <Gutter className="text-left!">{twoAxes && "-"}</Gutter>
            )}
            {cols.map((head, i) => (
              <th key={i} className="p-0 pl-[7px] font-normal">{i % 2 === line && head}</th>
            ))}
            <th />
          </tr>
        ))}
        <tr className="h-[15px]">
          <td colSpan={cols.length + 2} className="p-0 align-top">
            <div className="flex h-[15px] items-start">
              <div className="h-full w-[54px] shrink-0 border-r-[3px] border-double border-[#c8c8f0] pt-[5px]">
                <div className="h-[3px] w-full border-y border-[#c8c8f0]" />
              </div>
              <div className="mt-[5px] h-[3px] w-[10px] shrink-0 border-y border-[#c8c8f0]" />
              {picked && (
                <div className="mt-1 flex h-[5px] w-[35px] shrink-0 flex-col justify-center border-y border-[#ffff60] bg-[#404020]">
                  <div className="h-px bg-[#ffff60]" />
                </div>
              )}
              <div className="mt-[5px] h-[3px] grow border-y border-[#c8c8f0]" />
            </div>
          </td>
        </tr>
      </thead>
      <tbody>
        {rows.map((row, r) => (
          <tr key={r} className="h-[15px]">
            <Gutter className="pr-4" picked={picked}>{row.label}</Gutter>
            {row.values.map((value, i) => (
              <td
                key={i}
                className={clsx("p-0 text-right", changed && (i < cols.length - 1 || r === rows.length - 1) && "text-[#cc88b8]")}
              >
                {value}
              </td>
            ))}
            <td className="overflow-hidden p-0 pl-[15px] align-top">
              <Svg w={cols.length * 7} h={13}>
                {row.values.map((_, i) => {
                  const h = barHeights ? (barHeights[i] ?? 0) : 13;
                  const red = changed && (i < cols.length - 1 || r === rows.length - 1);
                  return <rect key={i} x={i * 7} y={13 - h} width="6" height={h} fill={red ? "#e08080" : "#c0c0c0"} />;
                })}
              </Svg>
            </td>
          </tr>
        ))}
      </tbody>
    </table>
  );
};

const TORQUE_AXIS = "210 420 640 660 750 800 1000 1250 1500 1750 2000 2250 2500 2750 3000 3250 3500 3750 4000 4500";
const RPM = ["690", "710", "800", "1000", "1125", "1250", "1500", "1625", "1750", "2000", "2250", "2500", "2750", "3000", "3500", "4500"];

const egrRows = (count: number, cols: number) =>
  RPM.slice(0, count).map((label) => ({ label, values: Array<string>(cols).fill("9500") }));

const Desktop = () => (
  <main className="relative min-w-0 grow overflow-hidden border-t border-l border-[#696969] bg-[#ababab]">
    <div className="absolute bottom-0 left-0 h-[2px] w-[160px] border-t border-[#505860] bg-[#d7e4f2]" />
    <MapWindow title="Audi A4 (EGR_OFF), 369513, EGR" place="left-0 top-[481px] w-[791px]" canvas="h-[313px]" thumb="h-[266px]">
      <MapGrid changed twoAxes heads="50 250 500 750 1000 1250 1500 1750 2000 2250 2500 2750 3000 4500" rows={egrRows(16, 14)} />
    </MapWindow>
    <MapWindow title="Audi A4 (EGR_OFF), 369513, EGR" place="left-[876px] top-[514px] w-[743px]" canvas="h-[283px]" thumb="h-[236px]">
      <MapGrid changed twoAxes heads="50 250 500 750 1000 1500 1800 2200 2500 2800 3000 3500 4500" rows={egrRows(14, 13)} />
    </MapWindow>
    <MapWindow title='Audi A4 (EGR_OFF), 369513, Map "Bosch 16" *' place="left-[171px] top-[490px] w-[1086px]" canvas="h-[87px]" thumb="h-[44px]">
      <MapGrid
        picked
        heads="210 699 700 840 1050 1260 1470 1680 1890 2100 2310 2520 2730 2919 2920 3086 3087 3780 3990 4200"
        rows={[{ values: Array<string>(20).fill("10000") }]}
      />
    </MapWindow>
    <MapWindow title='Audi A4 (EGR_OFF), 369513, Map "Bosch 16" *' place="left-[171px] top-[320px] w-[1086px]" canvas="h-[87px]" thumb="h-[44px]">
      <MapGrid
        heads={TORQUE_AXIS}
        barHeights={[0, 0, 0, 0, 0, 0, 0, 1, 1, 1, 2, 3]}
        rows={[{ values: "0 0 0 2500 2500 2600 2900 3200 3200 3200 3300 3500 3000 2900 2800 2800 2550 1200 200 200".split(" ") }]}
      />
    </MapWindow>
    <MapWindow title="Audi A4 (EGR_OFF), 369513, EGR Hysteresis *" place="left-[10px] top-[2px] w-[1238px]" canvas="h-[92px] pr-[11px]" thumb="h-[57px]">
      <MapGrid
        wide
        heads="760 1100 1400 1450 1500 1550 1600 1650 1700 1750 1800 1850 1900 1950 2000 2050 2100 2150 2200 4000"
        barHeights={[]}
        rows={[{ values: "472 688 900 932 962 993 1024 1056 1090 1125 1161 1198 1234 1269 1304 1337 1369 1403 1440 2700".split(" ") }]}
      />
    </MapWindow>
    <MapWindow active title='Audi A4 (EGR_OFF), 369513, Map "Bosch 16" *' place="left-[173px] top-[176px] w-[1086px]" canvas="h-[63px]" thumb="mt-[6px] h-[19px]">
      <MapGrid
        cornerless
        heads={TORQUE_AXIS}
        barHeights={[0, 0, 0, 0, 0, 0, 0, 0, 0, 0, 1, 2]}
        rows={[{ values: "0 0 0 2300 2300 2400 2700 3000 3000 3000 3100 3300 2800 2700 2600 2500 2250 1000 0 0".split(" ") }]}
      />
    </MapWindow>
  </main>
);

/* ---------- frame ---------- */

const MENU: [before: string, key: string, after: string][] = [
  ["", "P", "roject"],
  ["", "E", "dit"],
  ["", "H", "ardware"],
  ["", "V", "iew"],
  ["Sele", "c", "tion"],
  ["", "S", "earch"],
  ["", "M", "iscellaneous"],
  ["", "W", "indow"],
  ["", "?", ""],
];

const TitleBar = () => (
  <header className="flex h-[23px] shrink-0 items-center border-b border-[#d8d8d8] bg-[#fcfcfc] pl-px">
    <LogoIcon />
    <h1 className="grow pl-[78px] text-center text-sm">WinOLS</h1>
    <button aria-label="Minimize" className="flex h-[18px] w-[26px] items-center justify-center self-start">
      <Svg w={9} h={9}><path d="M0 5h8v2H0z" fill="#222" /></Svg>
    </button>
    <button aria-label="Restore" className="mr-1 flex h-[18px] w-[26px] items-center justify-center self-start">
      <Svg w={9} h={9}><path d="M.5 3.5h6v5h-6zM2.5 3V.5h6v6H7" stroke="#222" /></Svg>
    </button>
    <button aria-label="Close" className="mr-px flex h-[18px] w-[45px] items-center justify-center self-start bg-[#c75050]">
      <Svg w={8} h={8} smooth><path d="M0 0l8 8M8 0L0 8" stroke="#fff" strokeWidth="1.5" /></Svg>
    </button>
  </header>
);

const StatusBar = () => (
  <footer className="flex h-[22px] shrink-0 items-center border-t border-white bg-[#f0f0f0] px-[2px] font-['Roboto',sans-serif] whitespace-nowrap">
    <span className="grow">Press F1 to receive help.</span>
    <span className="flex items-center gap-2">
      <Svg w={12} h={12}>
        <path d="M1 0h10v4H9V3H5l3 3-3 3h4V8h2v4H1v-2l3-4-3-4z" fill="#20a020" stroke="#032" />
      </Svg>
      <Svg w={12} h={12} smooth>
        <circle cx="6" cy="6" r="4.5" fill="#30d830" stroke="#186018" strokeWidth="1.5" strokeDasharray="2 1" />
      </Svg>
      <Svg w={11} h={12} smooth>
        <path d="M0 6l4-4v2h3V2l4 4-4 4V8H4v2z" fill="#20d020" stroke="#108010" />
      </Svg>
      All CS ok - Checksum block 32 : okay
    </span>
    <span className="ml-[3px] flex h-[18px] items-center gap-2 border-l border-[#d0d0d0] pl-3">
      <HandIcon />
      No OLS-Module
    </span>
    <span className="ml-[3px] flex h-[18px] items-center border-l border-[#d0d0d0] pr-[3px] pl-1">
      Cursor: ECE22 =&gt; 00000 (00000) -&gt; 0 (0.00%), Width: 20
    </span>
  </footer>
);

const App = () => (
  <div className="flex h-screen flex-col overflow-hidden bg-[#f0f0f0] font-['Open_Sans',sans-serif] text-xs text-[#111]">
    <TitleBar />
    <nav className="flex h-[21px] shrink-0 items-center gap-[11px] border-b border-[#a0a0a0] bg-[#f6f7f8] px-[7px]">
      {MENU.map(([before, key, after]) => (
        <a key={before + key} href="#" className="leading-none">
          {before}
          <span className="underline underline-offset-2">{key}</span>
          {after}
        </a>
      ))}
    </nav>
    <Toolbars />
    <div className="flex min-h-0 grow">
      <Sidebar />
      <Desktop />
    </div>
    <StatusBar />
  </div>
);

export default App;
